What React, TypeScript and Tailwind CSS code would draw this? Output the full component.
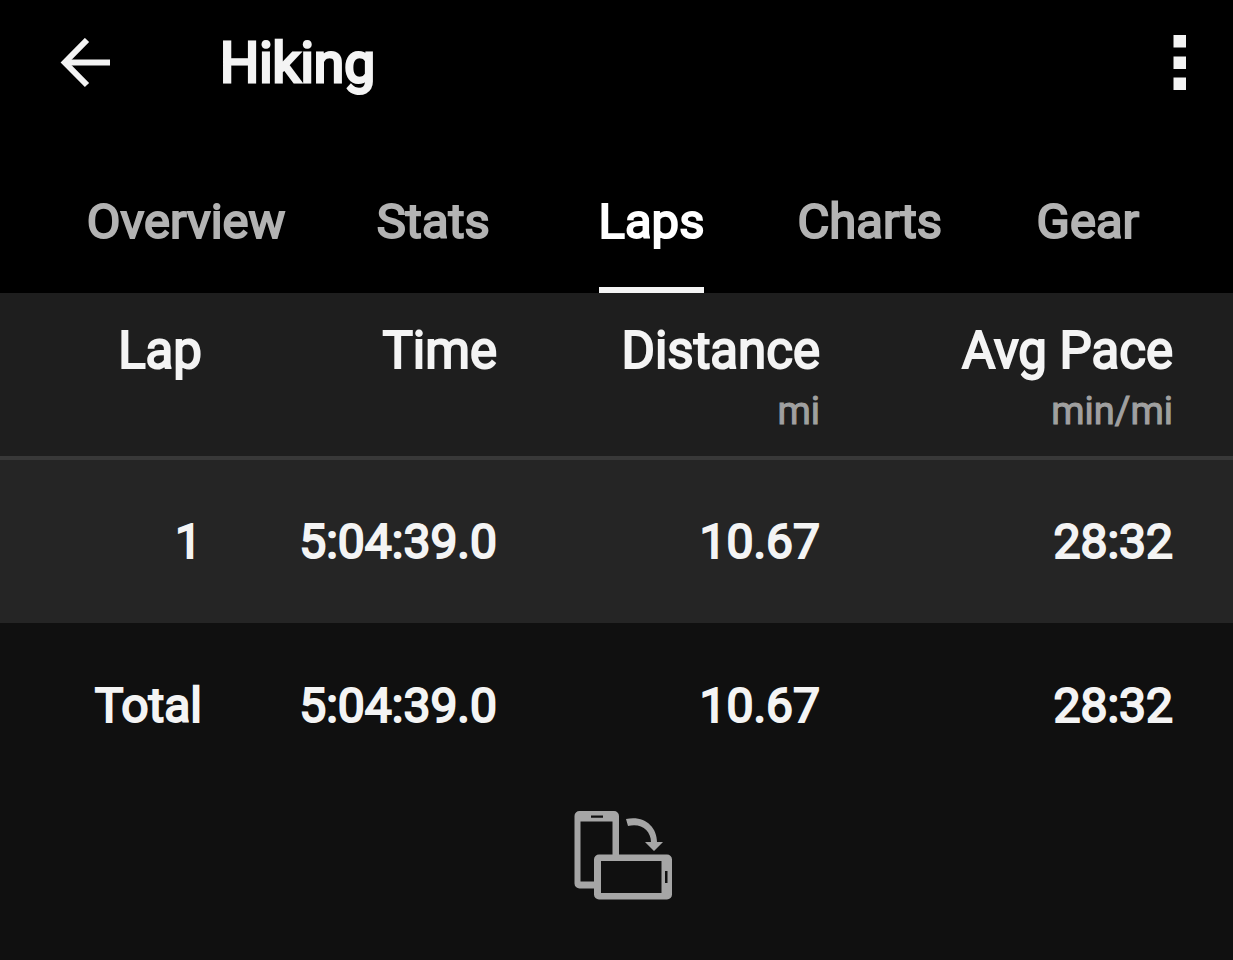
import React, { useState } from 'react';

interface LapRow {
  label: string;
  time: string;
  distance: string;
  pace: string;
}

const TABS = ['Overview', 'Stats', 'Laps', 'Charts', 'Gear'];

const COLUMNS = [
  { name: 'Lap', unit: '' },
  { name: 'Time', unit: '' },
  { name: 'Distance', unit: 'mi' },
  { name: 'Avg Pace', unit: 'min/mi' },
];

const LAPS: LapRow[] = [{ label: '1', time: '5:04:39.0', distance: '10.67', pace: '28:32' }];

const TOTAL: LapRow = { label: 'Total', time: '5:04:39.0', distance: '10.67', pace: '28:32' };

function BackIcon() {
  return (
    <svg width="50" height="50" viewBox="0 0 50 50" fill="none" stroke="currentColor" strokeWidth="6" aria-hidden="true">
      <path d="M50 24.500H6" />
      <path d="M27 2L4.800 24.500L27 47" />
    </svg>
  );
}

function MoreIcon() {
  return (
    <svg width="13" height="56" viewBox="0 0 13 56" fill="currentColor" aria-hidden="true">
      <rect x="0.500" y="0" width="12.500" height="12.500" />
      <rect x="0.500" y="21.500" width="12.500" height="12.500" />
      <rect x="0.500" y="42.500" width="12.500" height="12.500" />
    </svg>
  );
}

function RotateIcon() {
  return (
    <svg width="98" height="90" viewBox="0 0 98 90" aria-hidden="true">
      {/* upright phone */}
      <path
        fill="#a6a6a6"
        fillRule="evenodd"
        d="M5.500 0H40a5 5 0 0 1 5 5V46H38.500V10.500H6.500V70.500H22V77.500H5.500a5 5 0 0 1-5-5V5a5 5 0 0 1 5-5ZM17 4.500V6.800H29V4.500Z"
      />
      {/* phone on its side */}
      <path
        fill="#a6a6a6"
        fillRule="evenodd"
        d="M25 43.500H93a5 5 0 0 1 5 5V83.500a5 5 0 0 1-5 5H25a5 5 0 0 1-5-5V48.500a5 5 0 0 1 5-5ZM27 50V82H87.500V50ZM91 60V72H93.500V60Z"
      />
      {/* arrow */}
      <path
        fill="#a6a6a6"
        d="M52 8C70 4 83 15.500 83 31H89L80 40L71 31H77C77 19.500 67 11.500 54 15Z"
      />
    </svg>
  );
}

function LapCells({ row }: { row: LapRow }) {
  return (
    <>
      <th scope="row" className="pr-[60px] text-right font-normal">{row.label}</th>
      <td className="pr-[60px] text-right">{row.time}</td>
      <td className="pr-[60px] text-right">{row.distance}</td>
      <td className="pr-[60px] text-right">{row.pace}</td>
    </>
  );
}

export default function App() {
  const [activeTab, setActiveTab] = useState('Laps');

  return (
    <div className="min-h-screen bg-[#101010] font-['Roboto',sans-serif] text-[#f4f4f4]">
      <div className="bg-black">
        <header className="flex h-[126px] items-center pl-[60px] pr-[47px]">
          <button type="button" aria-label="Back" className="cursor-pointer">
            <BackIcon />
          </button>
          <h1 className="ml-[110px] flex-1 text-[55px] leading-[64px] font-normal [-webkit-text-stroke:3px]">Hiking</h1>
          <button type="button" aria-label="More options" className="cursor-pointer">
            <MoreIcon />
          </button>
        </header>

        <nav
          role="tablist"
          className="grid h-[167px] grid-cols-[276fr_218fr_218fr_218fr_218fr] pl-12 pr-9 text-[49px] leading-[60px] font-normal [-webkit-text-stroke:2px]"
        >
          {TABS.map((tab) => (
            <button
              key={tab}
              type="button"
              role="tab"
              aria-selected={tab === activeTab}
              onClick={() => setActiveTab(tab)}
              className={
                tab === activeTab
                  ? 'flex cursor-pointer flex-col items-center text-white'
                  : 'flex cursor-pointer flex-col items-center text-[#b3b3b3]'
              }
            >
              <span
                className={
                  tab === activeTab
                    ? 'h-full border-b-[6px] border-[#f4f4f4] pt-[66px]'
                    : 'h-full pt-[66px]'
                }
              >
                {tab}
              </span>
            </button>
          ))}
        </nav>
      </div>

      <table className="w-full table-fixed border-collapse text-[48px] leading-[60px] [-webkit-text-stroke:2px]">
        <colgroup>
          <col className="w-[262px]" />
          <col className="w-[295px]" />
          <col className="w-[323px]" />
          <col className="w-[353px]" />
        </colgroup>
        <thead>
          <tr className="h-[165px] border-b-4 border-[#383838] bg-[#1e1e1e] align-top">
            {COLUMNS.map((col) => (
              <th key={col.name} scope="col" className="pt-7 pr-[60px] text-right text-[51px] font-normal whitespace-nowrap">
                {col.name}
                {col.unit && (
                  <span className="block text-[38px] text-[#a0a0a0] [-webkit-text-stroke:1px]">{col.unit}</span>
                )}
              </th>
            ))}
          </tr>
        </thead>
        <tbody>
          {LAPS.map((lap) => (
            <tr key={lap.label} className="h-[165px] bg-[#252525]">
              <LapCells row={lap} />
            </tr>
          ))}
        </tbody>
        <tfoot>
          <tr className="h-[166px]">
            <LapCells row={TOTAL} />
          </tr>
        </tfoot>
      </table>

      <div className="flex justify-center pt-[22px] pb-10 pl-3">
        <RotateIcon />
      </div>
    </div>
  );
}
